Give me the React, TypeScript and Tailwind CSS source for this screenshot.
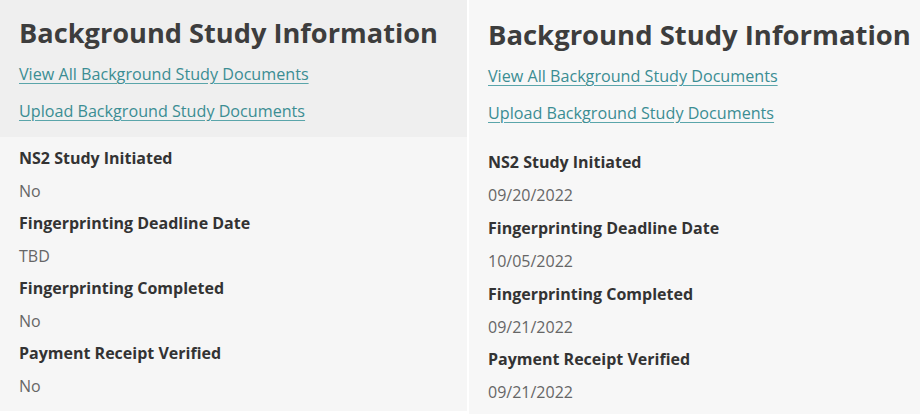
import React from 'react';

type Item = { label: string; value: string };

const leftItems: Item[] = [
  { label: 'NS2 Study Initiated', value: 'No' },
  { label: 'Fingerprinting Deadline Date', value: 'TBD' },
  { label: 'Fingerprinting Completed', value: 'No' },
  { label: 'Payment Receipt Verified', value: 'No' },
];

const rightItems: Item[] = [
  { label: 'NS2 Study Initiated', value: '09/20/2022' },
  { label: 'Fingerprinting Deadline Date', value: '10/05/2022' },
  { label: 'Fingerprinting Completed', value: '09/21/2022' },
  { label: 'Payment Receipt Verified', value: '09/21/2022' },
];

function Links() {
  return (
    <div className="flex flex-col gap-[13px] mt-[12px]">
      <a href="#" className="text-[16.15px] leading-[24px] text-[#3b8d93] underline underline-offset-[3px] decoration-[#5aa5aa] w-fit whitespace-nowrap">
        View All Background Study Documents
      </a>
      <a href="#" className="text-[16.15px] leading-[24px] text-[#3b8d93] underline underline-offset-[3px] decoration-[#5aa5aa] w-fit whitespace-nowrap">
        Upload Background Study Documents
      </a>
    </div>
  );
}

function Details({ items, step }: { items: Item[]; step: string }) {
  return (
    <dl className={step}>
      {items.map((item) => (
        <React.Fragment key={item.label}>
          <dt className="font-bold text-[16px] text-[#333333] whitespace-nowrap">{item.label}</dt>
          <dd className="text-[16px] text-[#666666]">{item.value}</dd>
        </React.Fragment>
      ))}
    </dl>
  );
}

export default function App() {
  return (
    <div
      className="w-[920px] h-[414px] bg-white flex overflow-hidden"
      style={{ fontFamily: '"Open Sans", "Liberation Sans", sans-serif' }}
    >
      {/* left capture */}
      <div className="w-[467px] h-[411px] bg-[#f6f6f6] flex flex-col shrink-0">
        <div className="bg-[#efefef] h-[137px] pl-[19px] pt-[16px]">
          <h2 className="text-[27.2px] leading-[34px] font-bold text-[#3d3d3d] whitespace-nowrap">
            Background Study Information
          </h2>
          <Links />
        </div>
        <div className="pl-[19px] pt-[5px]">
          <Details items={leftItems} step="leading-[32.5px]" />
        </div>
      </div>

      <div className="w-[2px] shrink-0" />

      {/* right capture */}
      <div className="flex-1 min-w-0 h-[414px] bg-[#f7f7f7] pl-[19px] pt-[18px]">
        <h2 className="text-[27.45px] leading-[34px] font-bold text-[#3d3d3d] whitespace-nowrap">
          Background Study Information
        </h2>
        <Links />
        <div className="pt-[21px]">
          <Details items={rightItems} step="leading-[32.9px]" />
        </div>
      </div>
    </div>
  );
}
